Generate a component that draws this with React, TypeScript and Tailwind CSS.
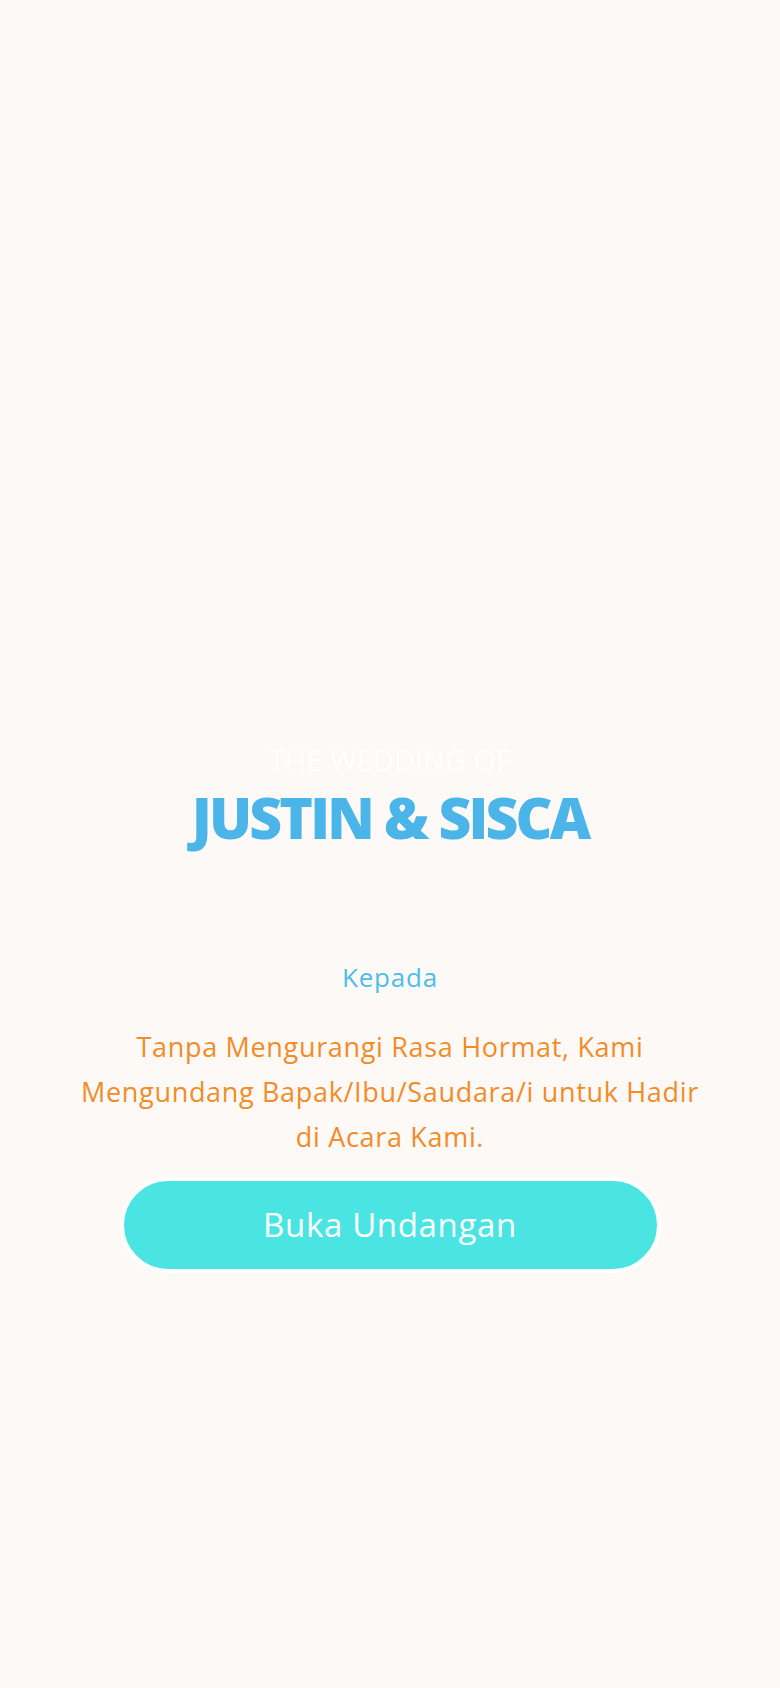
import React from "react";

export default function App() {
  return (
    <div className="min-h-[1688px] w-full bg-[#fdf9f6] flex flex-col items-center font-['Open_Sans',_sans-serif]">
      {/* Cover title */}
      <div className="mt-[742px] flex flex-col items-center">
        <p className="text-[29px] leading-[36px] text-white">THE WEDDING OF</p>
        <h1 className="mt-[6px] text-[57px] leading-[66px] font-extrabold text-[#4bb4e8] tracking-[-0.05em]">
          JUSTIN &amp; SISCA
        </h1>
      </div>

      {/* Invitation */}
      <p className="mt-[111px] text-[26px] leading-[32px] text-[#4dbde9] tracking-[0.03em]">Kepada</p>
      <p className="mt-[31px] text-[27px] leading-[45px] text-[#f28c28] text-center tracking-[0.025em]">
        Tanpa Mengurangi Rasa Hormat, Kami
        <br />
        Mengundang Bapak/Ibu/Saudara/i untuk Hadir
        <br />
        di Acara Kami.
      </p>

      <button className="mt-[18px] w-[541px] h-[96px] rounded-full border-4 border-white bg-[#4ae5e3] text-white text-[33px] tracking-[0.02em]">
        Buka Undangan
      </button>
    </div>
  );
}
